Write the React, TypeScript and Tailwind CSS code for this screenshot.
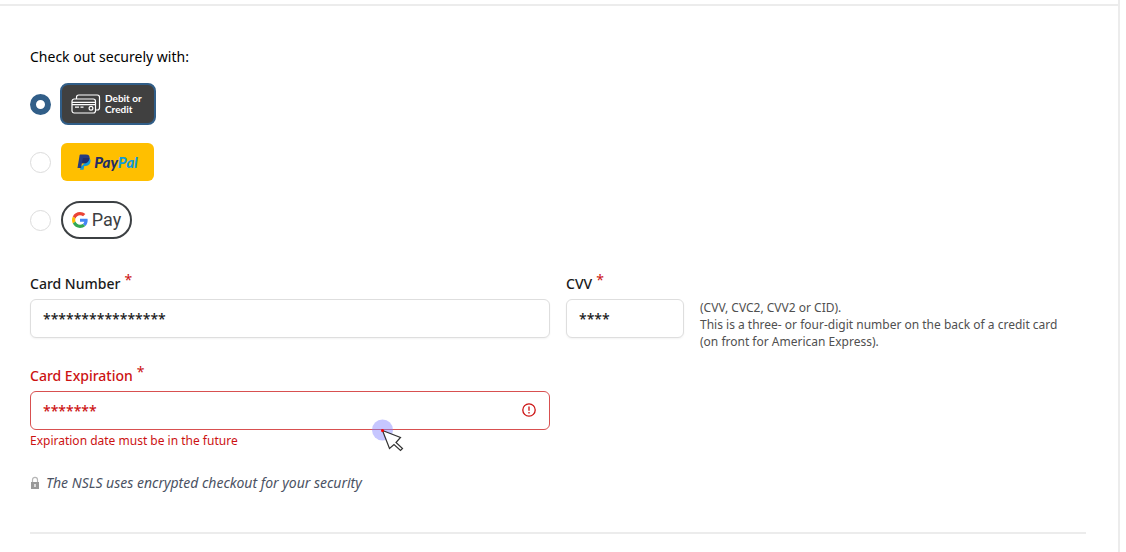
import { useState, type ReactNode } from 'react';

function CardsIcon() {
  return (
    <svg viewBox="0 0 30 20" className="h-5 w-[30px] shrink-0" fill="none" stroke="#fff" strokeWidth="1.2" aria-hidden="true">
      <path d="M5.500 5V3.200A2.200 2.200 0 0 1 7.700 1h18.600a2.200 2.200 0 0 1 2.200 2.200v10.600a2.200 2.200 0 0 1-2.200 2.200H24.500" />
      <rect x="1" y="5" width="23.500" height="14" rx="2.200" />
      <path d="M1 8.300h23.500M1 10.600h23.500M4 13.200h4M9.500 13.200h3" />
      <circle cx="20" cy="14.300" r="1.900" />
    </svg>
  );
}

function PayPalMark() {
  return (
    <svg viewBox="0 0 24 28" className="h-4 w-[14px] shrink-0" aria-hidden="true">
      <path fill="#139ad6" d="M21.500 7.500c2 1.800 2.300 4.400 1.600 7-1.200 4.600-4.500 6.300-8.800 6.300h-1.800l-1.300 6.700H5l1-4.500z" />
      <path fill="#263b80" d="M5.400 1h9.800c5.200 0 7.400 2.800 6.500 7.200-1.100 5.700-4.800 8.200-10.300 8.200H8.300L6.900 24.500H.6L4.400 1.900z" />
      <path fill="#232c65" d="M9.800 8.200c.1-.8.700-1.200 1.400-1.200h7.600c1.100 0 2 .2 2.800.6-1 6.200-4.700 8.800-10.200 8.800H8.300z" />
    </svg>
  );
}

function GoogleMark() {
  return (
    <svg viewBox="0 0 48 48" className="h-4 w-4 shrink-0" aria-hidden="true">
      <path fill="#ea4335" d="M24 9.500c3.540 0 6.710 1.220 9.210 3.600l6.850-6.850C35.900 2.380 30.470 0 24 0 14.620 0 6.510 5.380 2.560 13.220l7.980 6.190C12.430 13.720 17.740 9.500 24 9.500z" />
      <path fill="#4285f4" d="M46.980 24.550c0-1.570-.15-3.090-.38-4.550H24v9.020h12.940c-.58 2.960-2.260 5.480-4.780 7.180l7.730 6c4.510-4.180 7.090-10.360 7.090-17.650z" />
      <path fill="#fbbc05" d="M10.530 28.590c-.48-1.450-.76-2.990-.76-4.590s.27-3.140.76-4.590l-7.980-6.190C.92 16.460 0 20.120 0 24c0 3.880.92 7.540 2.560 10.780l7.970-6.190z" />
      <path fill="#34a853" d="M24 48c6.480 0 11.930-2.130 15.890-5.810l-7.730-6c-2.150 1.450-4.920 2.300-8.160 2.300-6.260 0-11.570-4.220-13.470-9.910l-7.980 6.190C6.510 42.620 14.620 48 24 48z" />
    </svg>
  );
}

function AlertIcon() {
  return (
    <svg viewBox="0 0 14 14" className="absolute top-3 right-3.5 h-3.5 w-3.5" fill="none" stroke="#cc1212" strokeWidth="1.300" aria-hidden="true">
      <circle cx="7" cy="7" r="6.200" />
      <path d="M7 3.600v4.200M7 9v1.400" />
    </svg>
  );
}

function LockIcon() {
  return (
    <svg viewBox="0 0 10 14" className="h-3.5 w-2.5 shrink-0" aria-hidden="true">
      <path d="M2.500 7V3.800a2.500 2.500 0 0 1 5 0V7" fill="none" stroke="#b5b5b5" strokeWidth="1.200" />
      <rect x="1" y="6" width="8" height="7" fill="#999" />
      <path d="M5 8v3" stroke="#fff" strokeWidth="1.300" />
    </svg>
  );
}

function Pointer() {
  return (
    <svg viewBox="0 0 34 34" className="pointer-events-none absolute top-7 left-[342px] h-[34px] w-[34px]" aria-hidden="true">
      <circle cx="10.500" cy="11" r="10.500" fill="#8080ff" fillOpacity=".45" />
      <path d="M10.500 11.500 28.500 18.500 24 23.500 30.500 29.500 28.500 31.500 22 25.500 17.500 29.500z" fill="#fff" stroke="#333" strokeWidth="1.200" />
      <circle cx="10.500" cy="11.500" r="1.500" fill="#f00" />
    </svg>
  );
}

type Method = 'card' | 'paypal' | 'gpay';

function PaymentOption(props: { value: Method; selected: Method; onSelect: (m: Method) => void; children: ReactNode }) {
  return (
    <label className="flex h-[42px] cursor-pointer items-center gap-[9px]">
      <input
        type="radio"
        name="method"
        value={props.value}
        checked={props.selected === props.value}
        onChange={() => props.onSelect(props.value)}
        className="h-[21px] w-[21px] shrink-0 appearance-none rounded-full border border-[#dcdcdc] bg-white checked:border-[6px] checked:border-[#315e88]"
      />
      {props.children}
    </label>
  );
}

function Required() {
  return <span className="relative -top-1 ml-1 font-normal text-[#cc1212]">*</span>;
}

const field = 'h-[39px] w-full rounded-md border bg-white px-3 text-sm font-medium outline-none';
const fieldLabel = 'mb-1 block h-[22px] text-sm leading-[22px] font-medium';

export default function App() {
  const [method, setMethod] = useState<Method>('card');
  const [number, setNumber] = useState('****************');
  const [cvv, setCvv] = useState('****');
  const [expiry, setExpiry] = useState('*******');

  return (
    <main className="mr-1.5 min-h-screen border-r-2 border-[#ececec] bg-white pt-1 font-['Noto_Sans','Open_Sans',sans-serif] text-sm text-[#1a1a1a]">
      <form className="border-t-2 border-[#ececec] pr-8 pl-[30px]">
        <fieldset className="pt-[41px]">
          <legend className="float-left mb-4 h-5 w-full leading-5 text-black">Check out securely with:</legend>
          <div className="clear-both flex flex-col gap-4">
            <PaymentOption value="card" selected={method} onSelect={setMethod}>
              <span className="flex h-[42px] w-24 items-center gap-1 rounded-lg border-2 border-[#315e88] bg-[#404040] pl-[9px]">
                <CardsIcon />
                <span className="font-[Lato,sans-serif] text-[10px] leading-[11px] font-bold text-white">
                  Debit or
                  <br />
                  Credit
                </span>
              </span>
            </PaymentOption>
            <PaymentOption value="paypal" selected={method} onSelect={setMethod}>
              <span className="ml-px flex h-[38px] w-[93px] items-center justify-center gap-[3px] rounded-md bg-[#ffbf00]">
                <PayPalMark />
                <span className="font-[Lato,sans-serif] text-[15px] leading-4 font-black text-[#232c65] italic">
                  Pay<span className="text-[#139ad6]">Pal</span>
                </span>
              </span>
            </PaymentOption>
            <PaymentOption value="gpay" selected={method} onSelect={setMethod}>
              <span className="ml-px flex h-[38px] w-[71px] items-center justify-center gap-1 rounded-full border-2 border-[#3c4043]">
                <GoogleMark />
                <span className="font-[Roboto,sans-serif] text-lg leading-6 text-[#3c4043]">Pay</span>
              </span>
            </PaymentOption>
          </div>
        </fieldset>

        <div className="mt-8 grid grid-cols-[520fr_118fr_386fr] gap-x-4 gap-y-[27px]">
          <div>
            <label htmlFor="number" className={fieldLabel}>
              Card Number
              <Required />
            </label>
            <input id="number" value={number} onChange={(e) => setNumber(e.target.value)} className={`${field} border-[#dedede] shadow-xs`} />
          </div>
          <div>
            <label htmlFor="cvv" className={fieldLabel}>
              CVV
              <Required />
            </label>
            <input id="cvv" value={cvv} onChange={(e) => setCvv(e.target.value)} className={`${field} border-[#dedede] shadow-xs`} />
          </div>
          <p className="-mb-3 pt-[26px] text-xs leading-[17px] text-[#505050]">
            (CVV, CVC2, CVV2 or CID).
            <br />
            This is a three- or four-digit number on the back of a credit card
            <br />
            (on front for American Express).
          </p>
          <div className="text-[#cc1212]">
            <label htmlFor="expiry" className={fieldLabel}>
              Card Expiration
              <Required />
            </label>
            <div className="relative">
              <input id="expiry" aria-invalid="true" aria-describedby="expiry-error" value={expiry} onChange={(e) => setExpiry(e.target.value)} className={`${field} border-[#d85050]`} />
              <AlertIcon />
              <Pointer />
            </div>
            <p id="expiry-error" className="mt-px text-xs leading-5">
              Expiration date must be in the future
            </p>
          </div>
        </div>

        <p className="mt-5 flex h-6 items-center gap-1.5 text-[#4b5263] italic">
          <LockIcon />
          The NSLS uses encrypted checkout for your security
        </p>
        <hr className="mt-[37px] border-t-2 border-[#ececec]" />
      </form>
    </main>
  );
}
